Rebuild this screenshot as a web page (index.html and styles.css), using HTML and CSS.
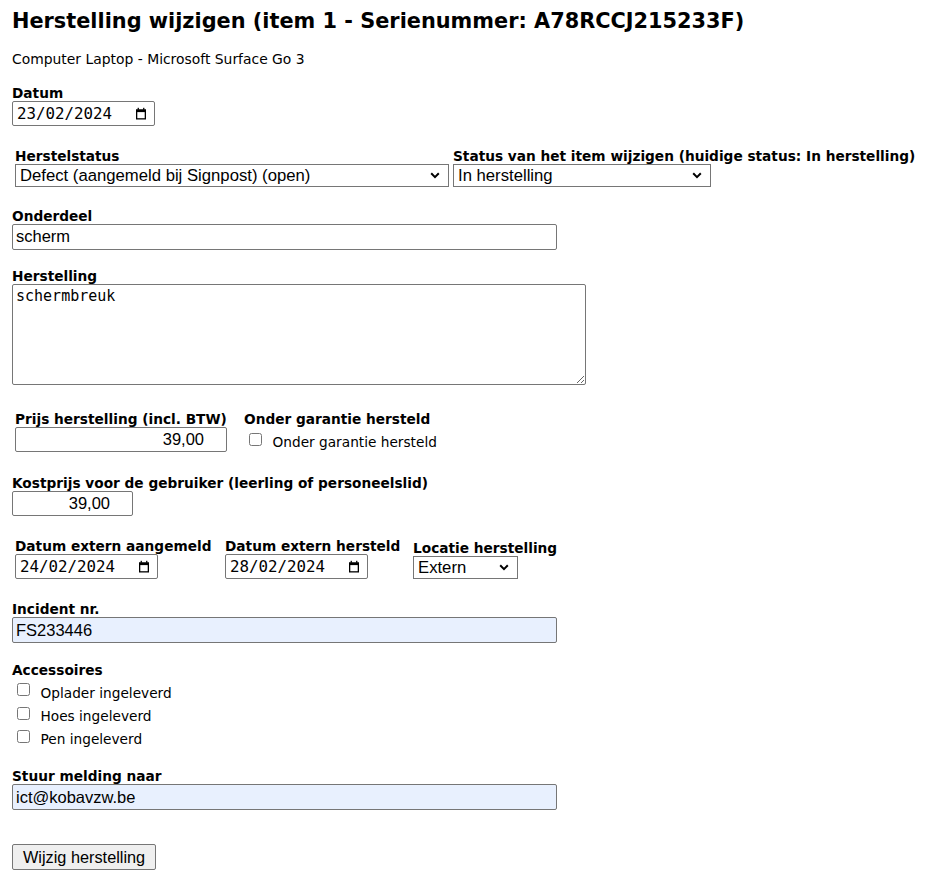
FILE: index.html
```html
<!DOCTYPE html>
<html lang="nl">
<head>
<meta charset="utf-8">
<title>Herstelling wijzigen</title>
<link rel="stylesheet" href="styles.css">
</head>
<body>
<h1 class="title">Herstelling wijzigen (item 1 - Serienummer: A78RCCJ215233F)</h1>
<p class="subtitle">Computer Laptop - Microsoft Surface Go 3</p>
<form class="form">
  <div class="field mt-datum">
    <label class="lbl">Datum</label>
    <span class="date"><span class="date-text">23/02/2024</span><svg class="cal" width="12" height="13" viewBox="0 0 12 13"><rect x="1.65" y="3.15" width="8.7" height="8.7" fill="none" stroke="#000" stroke-width="1.3"/><rect x="1" y="2.5" width="10" height="2.6" fill="#000"/><rect x="2.6" y="0.8" width="1.3" height="2" fill="#000"/><rect x="8.1" y="0.8" width="1.3" height="2" fill="#000"/></svg></span>
  </div>

  <div class="row mt-status">
    <div class="cell w-434">
      <label class="lbl">Herstelstatus</label>
      <span class="sel w-434"><select class="select"><option>Defect (aangemeld bij Signpost) (open)</option></select><svg class="chev" width="10" height="7" viewBox="0 0 10 7"><polyline points="1.2,1.3 5,5.1 8.8,1.3" fill="none" stroke="#000" stroke-width="2"/></svg></span>
    </div>
    <div class="cell">
      <label class="lbl">Status van het item wijzigen (huidige status: In herstelling)</label>
      <span class="sel w-258"><select class="select"><option>In herstelling</option></select><svg class="chev" width="10" height="7" viewBox="0 0 10 7"><polyline points="1.2,1.3 5,5.1 8.8,1.3" fill="none" stroke="#000" stroke-width="2"/></svg></span>
    </div>
  </div>

  <div class="field mt-18">
    <label class="lbl">Onderdeel</label>
    <input class="text w-545" type="text" value="scherm">
  </div>

  <div class="field mt-18">
    <label class="lbl">Herstelling</label>
    <textarea class="area">schermbreuk</textarea>
  </div>

  <div class="row mt-prijs">
    <div class="cell w-225">
      <label class="lbl">Prijs herstelling (incl. BTW)</label>
      <input class="text num w-212" type="text" value="39,00">
    </div>
    <div class="cell">
      <label class="lbl">Onder garantie hersteld</label>
      <label class="check h-25"><input class="box" type="checkbox"><span class="check-text">Onder garantie hersteld</span></label>
    </div>
  </div>

  <div class="field mt-kost">
    <label class="lbl">Kostprijs voor de gebruiker (leerling of personeelslid)</label>
    <input class="text num w-121" type="text" value="39,00">
  </div>

  <div class="row mt-dates">
    <div class="cell w-206">
      <label class="lbl">Datum extern aangemeld</label>
      <span class="date"><span class="date-text">24/02/2024</span><svg class="cal" width="12" height="13" viewBox="0 0 12 13"><rect x="1.65" y="3.15" width="8.7" height="8.7" fill="none" stroke="#000" stroke-width="1.3"/><rect x="1" y="2.5" width="10" height="2.6" fill="#000"/><rect x="2.6" y="0.8" width="1.3" height="2" fill="#000"/><rect x="8.1" y="0.8" width="1.3" height="2" fill="#000"/></svg></span>
    </div>
    <div class="cell w-184">
      <label class="lbl">Datum extern hersteld</label>
      <span class="date"><span class="date-text">28/02/2024</span><svg class="cal" width="12" height="13" viewBox="0 0 12 13"><rect x="1.65" y="3.15" width="8.7" height="8.7" fill="none" stroke="#000" stroke-width="1.3"/><rect x="1" y="2.5" width="10" height="2.6" fill="#000"/><rect x="2.6" y="0.8" width="1.3" height="2" fill="#000"/><rect x="8.1" y="0.8" width="1.3" height="2" fill="#000"/></svg></span>
    </div>
    <div class="cell cell-end">
      <label class="lbl">Locatie herstelling</label>
      <span class="sel w-105"><select class="select"><option>Extern</option></select><svg class="chev" width="10" height="7" viewBox="0 0 10 7"><polyline points="1.2,1.3 5,5.1 8.8,1.3" fill="none" stroke="#000" stroke-width="2"/></svg></span>
    </div>
  </div>

  <div class="field mt-incident">
    <label class="lbl">Incident nr.</label>
    <input class="text w-545 filled" type="text" value="FS233446">
  </div>

  <div class="field mt-acc">
    <label class="lbl">Accessoires</label>
    <label class="check h-23"><input class="box" type="checkbox"><span class="check-text">Oplader ingeleverd</span></label>
    <label class="check h-23"><input class="box" type="checkbox"><span class="check-text">Hoes ingeleverd</span></label>
    <label class="check h-23"><input class="box" type="checkbox"><span class="check-text">Pen ingeleverd</span></label>
  </div>

  <div class="field mt-stuur">
    <label class="lbl">Stuur melding naar</label>
    <input class="text w-545 filled" type="text" value="ict@kobavzw.be">
  </div>

  <div class="field mt-btn">
    <button class="btn" type="button">Wijzig herstelling</button>
  </div>
</form>
</body>
</html>
```

FILE: styles.css
```css
html, body {
  background: #fff;
}
body {
  margin: 9px 12px 0 12px;
  color: #000;
  font-family: "DejaVu Sans", Verdana, sans-serif;
}
.title {
  margin: 0;
  font-size: 20.85px;
  line-height: 24px;
  font-weight: bold;
  white-space: nowrap;
}
.subtitle {
  margin: 18px 0 0 0;
  font-size: 13.9px;
  line-height: 16px;
}
.form {
  margin: 0;
}
.field {
  display: flex;
  flex-direction: column;
  align-items: flex-start;
}
.row {
  display: flex;
  align-items: flex-start;
  gap: 4px;
  padding: 3px;
}
.cell {
  display: flex;
  flex-direction: column;
  align-items: flex-start;
  flex: none;
}
.cell-end {
  align-self: flex-end;
}
.mt-datum { margin-top: 17.5px; }
.mt-status { margin-top: 19px; }
.mt-18 { margin-top: 18px; }
.mt-prijs { margin-top: 23.3px; }
.mt-kost { margin-top: 20px; }
.mt-dates { margin-top: 19.7px; }
.mt-incident { margin-top: 19px; }
.mt-acc { margin-top: 18.7px; }
.mt-stuur { margin-top: 20.3px; }
.mt-btn { margin-top: 33.6px; }

.w-434 { width: 434px; }
.w-258 { width: 258px; }
.w-225 { width: 225px; }
.w-212 { width: 212px; }
.w-206 { width: 206px; }
.w-184 { width: 184px; }
.w-121 { width: 121px; }
.w-105 { width: 105px; }
.w-545 { width: 545px; }

.lbl {
  display: block;
  font-size: 13.7px;
  line-height: 16px;
  font-weight: bold;
  white-space: nowrap;
}

.text {
  box-sizing: border-box;
  height: 26px;
  margin: 0;
  padding: 0 3px;
  border: 1px solid #767676;
  border-radius: 2px;
  background: #fff;
  color: #000;
  font-family: "Liberation Sans", Arial, sans-serif;
  font-size: 16.5px;
  outline: none;
}
.num {
  height: 25px;
  text-align: right;
  padding-right: 22px;
}
.filled {
  background: #e8f0fe;
}

.area {
  box-sizing: border-box;
  width: 574px;
  height: 101px;
  margin: 0;
  padding: 2px 3px;
  border: 1px solid #767676;
  border-radius: 2px;
  font-family: "DejaVu Sans Mono", Consolas, monospace;
  font-size: 15px;
  color: #000;
  outline: none;
}

.date {
  box-sizing: border-box;
  display: flex;
  align-items: center;
  justify-content: space-between;
  width: 143px;
  height: 25px;
  padding: 0 7px 0 4px;
  border: 1px solid #767676;
  border-radius: 2px;
  background: #fff;
}
.date-text {
  font-family: "DejaVu Sans Mono", Consolas, monospace;
  font-size: 15.8px;
  letter-spacing: 0;
}
.cal {
  display: block;
  flex: none;
}

.sel {
  position: relative;
  display: block;
  height: 23px;
}
.select {
  -webkit-appearance: none;
  appearance: none;
  box-sizing: border-box;
  display: block;
  width: 100%;
  height: 23px;
  margin: 0;
  padding: 0 20px 0 4px;
  border: 1px solid #767676;
  border-radius: 0;
  background: #fff;
  color: #000;
  font-family: "Liberation Sans", Arial, sans-serif;
  font-size: 16.7px;
  line-height: 21px;
  outline: none;
}
.chev {
  position: absolute;
  right: 9px;
  top: 8px;
  pointer-events: none;
}

.check {
  display: flex;
  align-items: center;
}
.h-25 { height: 25px; }
.h-23 { height: 23.33px; }
.box {
  width: 13px;
  height: 13px;
  margin: 0 0 0 5px;
  flex: none;
}
.check-text {
  margin-left: 10.5px;
  padding-top: 6px;
  font-size: 13.7px;
  line-height: 16px;
  white-space: nowrap;
}

.btn {
  box-sizing: border-box;
  height: 26px;
  margin: 0;
  padding: 0 10px;
  border: 1px solid #767676;
  border-radius: 2px;
  background: #efefef;
  color: #000;
  font-family: "Liberation Sans", Arial, sans-serif;
  font-size: 16.3px;
}
```
